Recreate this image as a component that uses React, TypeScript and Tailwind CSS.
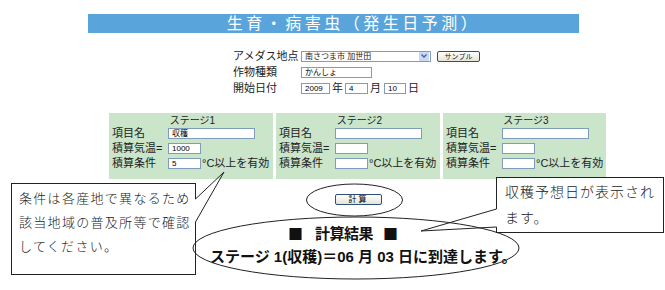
import React from 'react';

const box = 'border border-[#7f9db9] bg-white h-[11px] text-[8px] leading-[9px] px-[3px] text-black overflow-hidden whitespace-nowrap';

interface StageProps {
    title: string;
    name: string;
    temp: string;
    cond: string;
    width: string;
}

const Stage: React.FC<StageProps> = ({ title, name, temp, cond, width }) => (
    <div className={`${width} h-[66px] bg-[#cae5ca] pl-[3px] pt-[2px]`}>
        <div className="h-[12px] text-center text-[10px] leading-[12px] text-[#222]">{title}</div>
        <div className="flex flex-col gap-[3px] text-[11px] leading-[12px] text-[#222]">
            <div className="flex items-center h-[12px]">
                <span className="w-[56px]">項目名</span>
                <div className={`${box} w-[87px]`}>{name}</div>
            </div>
            <div className="flex items-center h-[12px]">
                <span className="w-[56px] whitespace-nowrap">積算気温=</span>
                <div className={`${box} w-[33px]`}>{temp}</div>
            </div>
            <div className="flex items-center h-[12px]">
                <span className="w-[56px]">積算条件</span>
                <div className={`${box} w-[33px]`}>{cond}</div>
                <span className="ml-[1px] whitespace-nowrap">°C以上を有効</span>
            </div>
        </div>
    </div>
);

export default function App() {
    return (
        <div className="relative w-[665px] h-[290px] overflow-hidden bg-white font-['Liberation_Sans','Noto_Sans_CJK_JP',sans-serif] text-black">
            {/* title bar */}
            <div className="mt-[14px] ml-[88px] w-[491px] h-[19px] bg-[#5aa4dc] text-white text-[16px] leading-[19px] tracking-[3.5px] text-center pl-[40px]">
                生育・病害虫（発生日予測）
            </div>

            {/* form */}
            <div className="mt-[17px] ml-[233px] flex flex-col gap-[4px] text-[11px] leading-[12px] text-[#222]">
                <div className="flex items-center h-[12px]">
                    <span className="w-[68px]">アメダス地点</span>
                    <div className="flex items-center w-[130px] h-[11px] border border-[#7f9db9] bg-white">
                        <span className="flex-1 text-[8px] leading-[9px] pl-[3px] whitespace-nowrap">南さつま市 加世田</span>
                        <div className="w-[10px] h-[9px] mr-[1px] bg-[#c9d8f8] flex items-center justify-center">
                            <svg width="6" height="4" viewBox="0 0 6 4">
                                <path d="M0.5 0.5 L3 3 L5.5 0.5" fill="none" stroke="#4d6185" strokeWidth="1.3" />
                            </svg>
                        </div>
                    </div>
                    <div className="ml-[6px] w-[43px] h-[11px] border border-[#2c4f7c] rounded-[2px] bg-gradient-to-b from-white to-[#e6e3d6] text-[7px] leading-[9px] text-center">
                        サンプル
                    </div>
                </div>
                <div className="flex items-center h-[12px]">
                    <span className="w-[68px]">作物種類</span>
                    <div className={`${box} w-[71px]`}>かんしょ</div>
                </div>
                <div className="flex items-center h-[12px]">
                    <span className="w-[68px]">開始日付</span>
                    <div className={`${box} w-[29px]`}>2009</div>
                    <span className="w-[15px] pl-[2px]">年</span>
                    <div className={`${box} w-[23px]`}>4</div>
                    <span className="w-[16px] pl-[2px]">月</span>
                    <div className={`${box} w-[22px]`}>10</div>
                    <span className="pl-[2px]">日</span>
                </div>
            </div>

            {/* stages */}
            <div className="mt-[19px] ml-[109px] flex gap-[3px]">
                <Stage title="ステージ1" name="収穫" temp="1000" cond="5" width="w-[164px]" />
                <Stage title="ステージ2" name="" temp="" cond="" width="w-[164px]" />
                <Stage title="ステージ3" name="" temp="" cond="" width="w-[163px]" />
            </div>

            {/* calc button */}
            <div className="mt-[15px] ml-[335px] w-[47px] h-[11px] border border-[#2c4f7c] rounded-[2px] bg-gradient-to-b from-white to-[#e6e3d6] text-[8px] leading-[9px] tracking-[2px] text-center">
                計算
            </div>

            {/* result */}
            <div className="mt-[20px] font-bold text-[#111]">
                <div className="flex items-center pl-[288px] h-[18px] text-[15px] leading-[18px]">
                    <span className="font-['Noto_Sans_CJK_JP',sans-serif]">■</span>
                    <span className="ml-[12px] tracking-[-0.5px]">計算結果</span>
                    <span className="ml-[10px] font-['Noto_Sans_CJK_JP',sans-serif]">■</span>
                </div>
                <div className="mt-[5px] pl-[210px] h-[18px] text-[15px] leading-[18px] whitespace-nowrap">
                    ステージ 1(収穫)＝06 月 03 日に到達します。
                </div>
            </div>

            {/* callout boxes */}
            <div className="absolute left-[11px] top-[183px] w-[185px] h-[92px] border border-[#222] bg-white pl-[7px] pt-[2px] text-[13px] leading-[24px] tracking-[1.3px] text-[#222] font-['Noto_Sans_CJK_JP',sans-serif] font-light">
                <div>条件は各産地で異なるため</div>
                <div>該当地域の普及所等で確認</div>
                <div>してください。</div>
            </div>
            <div className="absolute left-[496px] top-[177px] w-[168px] h-[56px] border border-[#222] bg-white pl-[8px] text-[14px] leading-[26px] tracking-[1px] text-[#222] font-['Noto_Sans_CJK_JP',sans-serif] font-light">
                <div>収穫予想日が表示され</div>
                <div>ます。</div>
            </div>

            {/* tails and ellipses */}
            <svg className="absolute inset-0 pointer-events-none" width="665" height="290" viewBox="0 0 665 290">
                <rect x="194" y="199" width="4" height="23" fill="white" />
                <polyline points="195.5,199 224,172 195.5,222" fill="none" stroke="#222" strokeWidth="1" />
                <rect x="494" y="209" width="4" height="18" fill="white" />
                <polyline points="496.5,209 421,231 496.5,227" fill="none" stroke="#222" strokeWidth="1" />
                <ellipse cx="354.5" cy="200" rx="48" ry="16" fill="none" stroke="#222" strokeWidth="1" />
                <ellipse cx="356" cy="248" rx="163" ry="31" fill="none" stroke="#222" strokeWidth="1" />
            </svg>
        </div>
    );
}
